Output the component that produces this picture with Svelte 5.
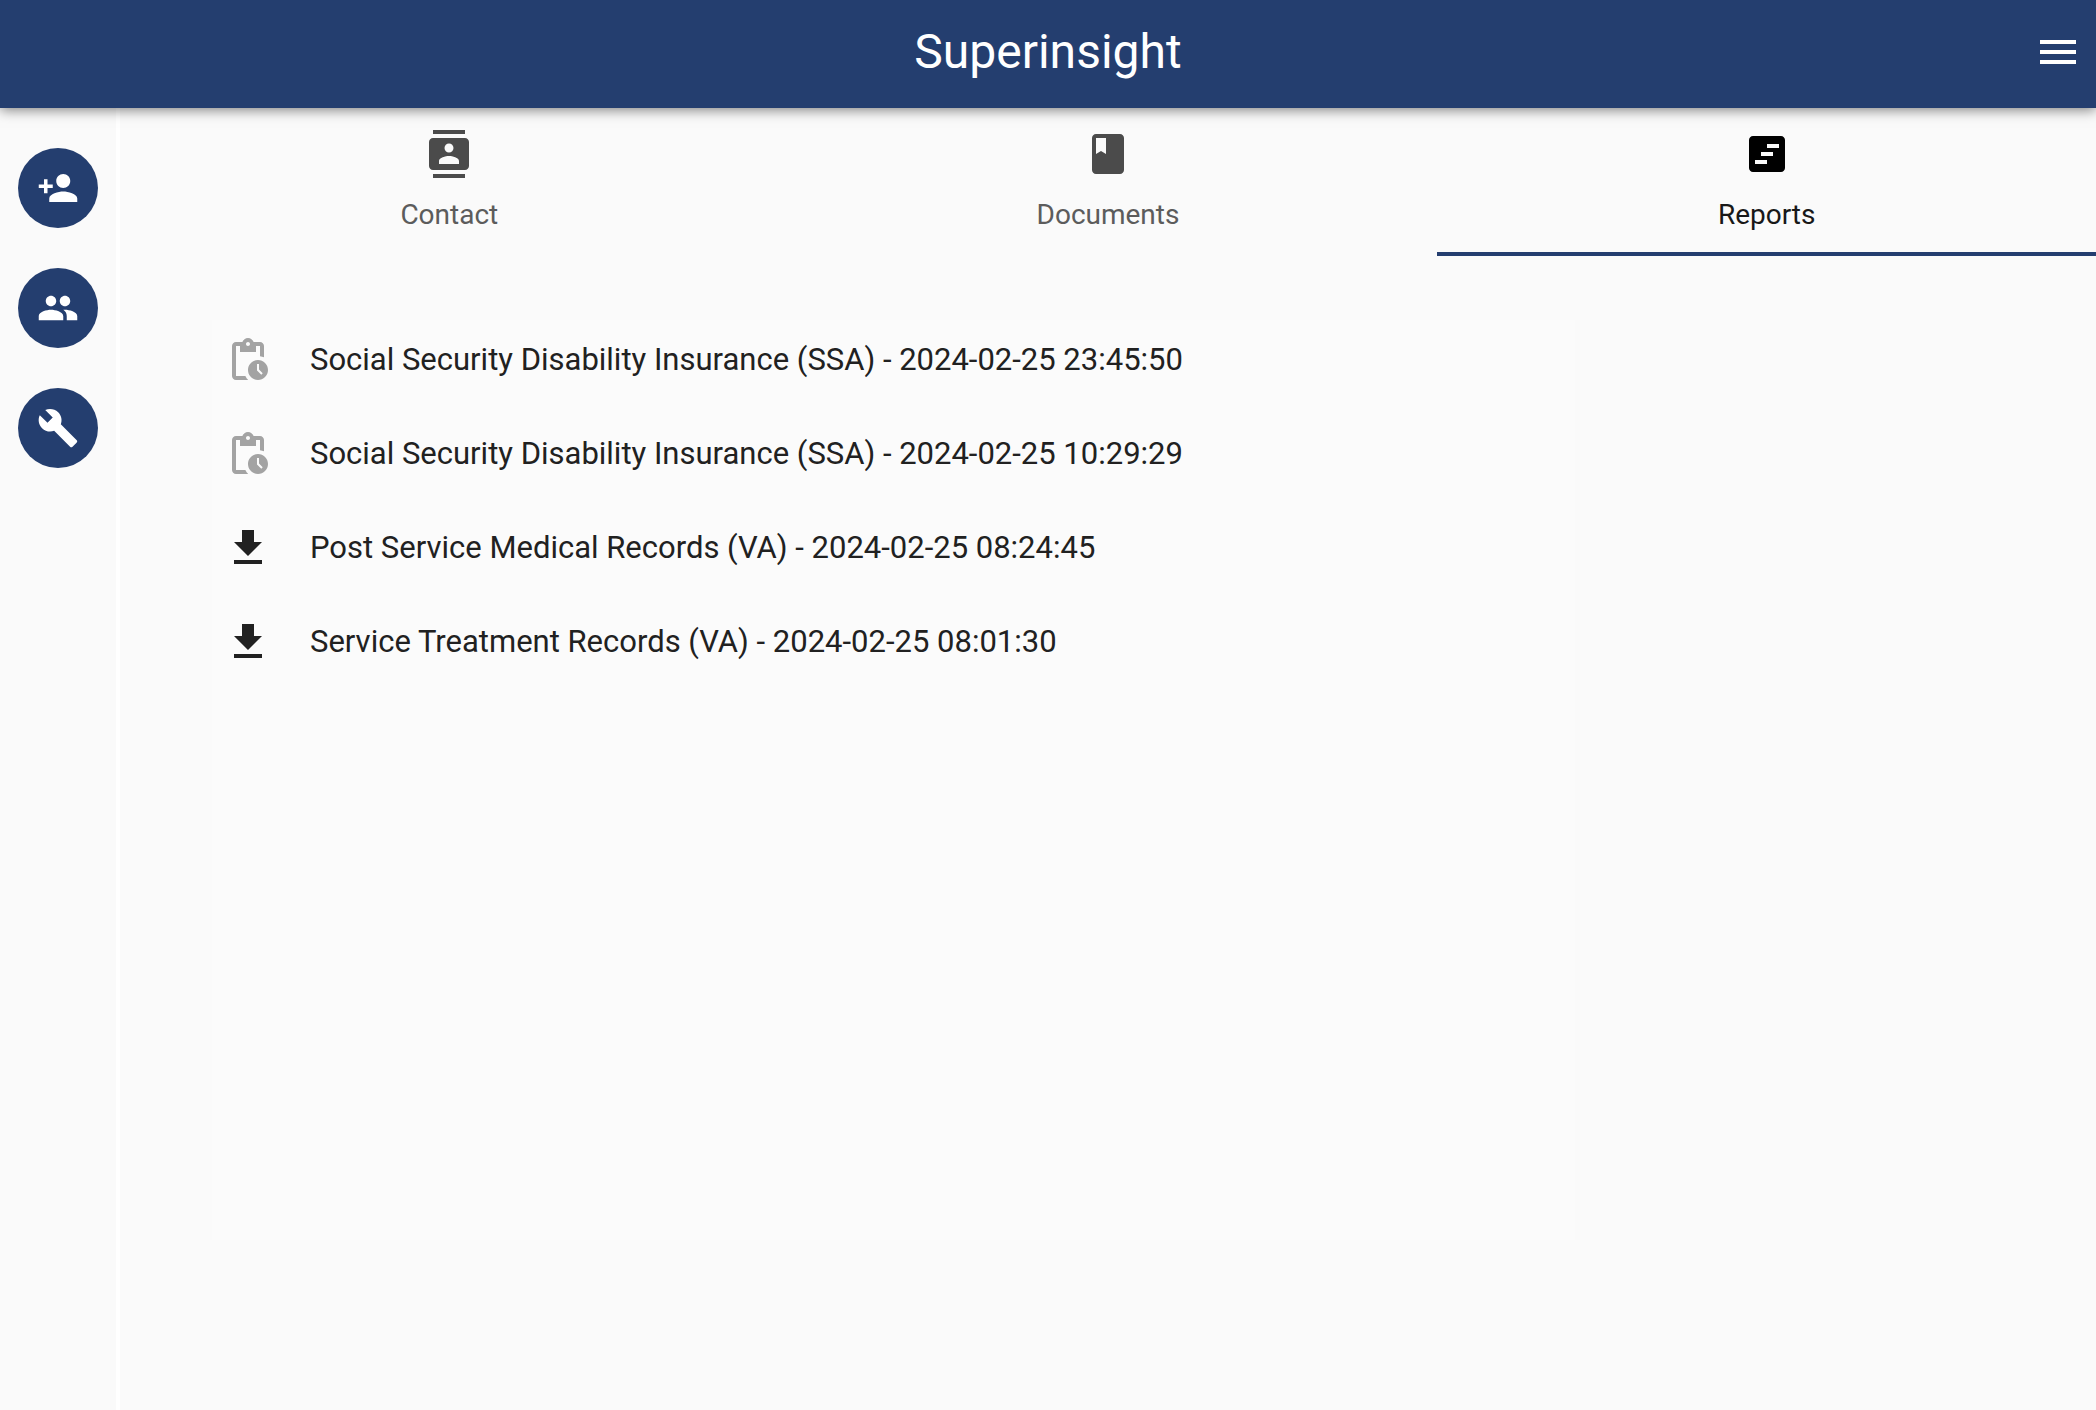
<script>
  let activeTab = $state('reports');

  const actions = [
    {
      label: 'Add contact',
      path: 'M15 12c2.21 0 4-1.79 4-4s-1.79-4-4-4-4 1.79-4 4 1.79 4 4 4zm-9-2V7H4v3H1v2h3v3h2v-3h3v-2H6zm9 4c-2.67 0-8 1.34-8 4v2h16v-2c0-2.66-5.33-4-8-4z'
    },
    {
      label: 'Contacts',
      path: 'M16 11c1.66 0 2.99-1.34 2.99-3S17.66 5 16 5c-1.66 0-3 1.34-3 3s1.34 3 3 3zm-8 0c1.66 0 2.99-1.34 2.99-3S9.66 5 8 5C6.34 5 5 6.34 5 8s1.34 3 3 3zm0 2c-2.33 0-7 1.17-7 3.5V19h14v-2.5c0-2.33-4.67-3.5-7-3.5zm8 0c-.29 0-.62.02-.97.05 1.16.84 1.97 1.97 1.97 3.45V19h6v-2.5c0-2.33-4.67-3.5-7-3.5z'
    },
    {
      label: 'Tools',
      path: 'M22.7 19l-9.1-9.1c.9-2.3.4-5-1.5-6.9-2-2-5-2.4-7.4-1.3L9 6 6 9 1.6 4.7C.4 7.1.9 10.1 2.9 12.1c1.9 1.9 4.6 2.4 6.9 1.5l9.1 9.1c.4.4 1 .4 1.4 0l2.3-2.3c.5-.4.5-1.1.1-1.4z'
    }
  ];

  const tabs = [
    {
      id: 'contact',
      label: 'Contact',
      path: 'M20 0H4v2h16V0zM4 24h16v-2H4v2zM20 4H4c-1.1 0-2 .9-2 2v12c0 1.1.9 2 2 2h16c1.1 0 2-.9 2-2V6c0-1.1-.9-2-2-2zm-8 2.75c1.24 0 2.25 1.01 2.25 2.25s-1.01 2.25-2.25 2.25S9.75 10.24 9.75 9 10.76 6.75 12 6.75zM17 17H7v-1.5c0-1.67 3.33-2.5 5-2.5s5 .83 5 2.5V17z'
    },
    {
      id: 'documents',
      label: 'Documents',
      path: 'M18 2H6c-1.1 0-2 .9-2 2v16c0 1.1.9 2 2 2h12c1.1 0 2-.9 2-2V4c0-1.1-.9-2-2-2zM6 4h5v8l-2.5-1.5L6 12V4z'
    },
    {
      id: 'reports',
      label: 'Reports',
      path: 'M19 3H5c-1.1 0-2 .9-2 2v14c0 1.1.9 2 2 2h14c1.1 0 2-.9 2-2V5c0-1.1-.9-2-2-2zM12 17H6v-2h6v2zm3-4H9v-2h6v2zm3-4h-6V7h6v2z'
    }
  ];

  const icons = {
    pending:
      'M17 12c-2.76 0-5 2.24-5 5s2.24 5 5 5 5-2.24 5-5-2.24-5-5-5zm1.65 7.35L16.5 17.2V14h1v2.79l1.85 1.85-.7.71zM18 3h-3.18C14.4 1.84 13.3 1 12 1s-2.4.84-2.82 2H6c-1.1 0-2 .9-2 2v15c0 1.1.9 2 2 2h6.11c-.59-.57-1.07-1.25-1.42-2H6V5h2v3h8V5h2v5.08c.71.1 1.38.31 2 .6V5c0-1.1-.9-2-2-2zm-6 2c-.55 0-1-.45-1-1s.45-1 1-1 1 .45 1 1-.45 1-1 1z',
    ready: 'M19 9h-4V3H9v6H5l7 7 7-7zM5 18v2h14v-2H5z'
  };

  const reports = [
    { name: 'Social Security Disability Insurance (SSA)', created: '2024-02-25 23:45:50', status: 'pending' },
    { name: 'Social Security Disability Insurance (SSA)', created: '2024-02-25 10:29:29', status: 'pending' },
    { name: 'Post Service Medical Records (VA)', created: '2024-02-25 08:24:45', status: 'ready' },
    { name: 'Service Treatment Records (VA)', created: '2024-02-25 08:01:30', status: 'ready' }
  ];
</script>

<div class="app">
  <header>
    <h1>Superinsight</h1>
    <button class="menu" aria-label="Open menu">
      <svg viewBox="0 0 24 24"><path d="M3 18h18v-2H3v2zm0-5h18v-2H3v2zm0-7v2h18V6H3z" /></svg>
    </button>
  </header>

  <div class="body">
    <nav class="rail" aria-label="Shortcuts">
      {#each actions as action}
        <button aria-label={action.label}>
          <svg viewBox="0 0 24 24"><path d={action.path} /></svg>
        </button>
      {/each}
    </nav>

    <main>
      <div class="tabs" role="tablist">
        {#each tabs as tab}
          <button
            role="tab"
            aria-selected={activeTab === tab.id}
            class:active={activeTab === tab.id}
            onclick={() => (activeTab = tab.id)}
          >
            <svg viewBox="0 0 24 24"><path d={tab.path} /></svg>
            <span>{tab.label}</span>
          </button>
        {/each}
      </div>

      <ul class="reports">
        {#each reports as report}
          <li>
            <button class={report.status}>
              <svg viewBox="0 0 24 24"><path d={icons[report.status]} /></svg>
              <span>{report.name} - {report.created}</span>
            </button>
          </li>
        {/each}
      </ul>
    </main>
  </div>
</div>

<style>
  :global(body) {
    background: #fafafa;
  }

  .app {
    display: flex;
    flex-direction: column;
    min-height: 100vh;
    font-family: Roboto, 'Liberation Sans', sans-serif;
    color: #212121;
  }

  button {
    margin: 0;
    padding: 0;
    border: 0;
    background: none;
    color: inherit;
    font: inherit;
    cursor: pointer;
  }

  svg {
    display: block;
    flex: none;
    width: 48px;
    height: 48px;
    fill: currentColor;
  }

  header {
    z-index: 1;
    display: grid;
    grid-template-columns: 1fr auto 1fr;
    align-items: center;
    box-sizing: border-box;
    height: 108px;
    padding: 0 14px 4px;
    background: #243e6f;
    color: #fff;
    box-shadow: 0 2px 12px rgba(0, 0, 0, 0.5);
  }

  h1 {
    grid-column: 2;
    margin: 0;
    font-size: 48px;
    font-weight: 400;
    line-height: 56px;
  }

  .menu {
    justify-self: end;
  }

  .body {
    display: flex;
    flex: 1;
  }

  .rail {
    display: flex;
    flex-direction: column;
    gap: 40px;
    padding: 40px 18px;
    border-right: 4px solid #fff;
  }

  .rail button {
    display: grid;
    place-items: center;
    width: 80px;
    height: 80px;
    border-radius: 50%;
    background: #243e6f;
    color: #fff;
  }

  .rail svg {
    width: 42px;
    height: 42px;
  }

  main {
    display: flex;
    flex: 1;
    flex-direction: column;
  }

  .tabs {
    display: grid;
    grid-template-columns: repeat(3, 1fr);
  }

  .tabs button {
    display: flex;
    flex-direction: column;
    align-items: center;
    gap: 21px;
    padding: 22px 0 21px;
    border-bottom: 4px solid transparent;
    color: #4b4b4b;
    font-size: 28px;
    line-height: 32px;
  }

  .tabs span {
    opacity: 0.9;
  }

  .tabs .active {
    border-color: #243e6f;
    color: #000;
  }

  .reports {
    display: flex;
    flex: 1;
    flex-direction: column;
    gap: 14px;
    box-sizing: border-box;
    width: 69%;
    margin: 64px 0 170px 92px;
    padding: 0;
    background: #fbfbfb;
    list-style: none;
  }

  .reports button {
    display: flex;
    align-items: center;
    gap: 38px;
    width: 100%;
    height: 80px;
    padding: 0 12px;
    font-size: 31px;
    line-height: 40px;
    text-align: left;
  }

  .reports .pending svg {
    color: #a3a3a3;
  }
</style>
